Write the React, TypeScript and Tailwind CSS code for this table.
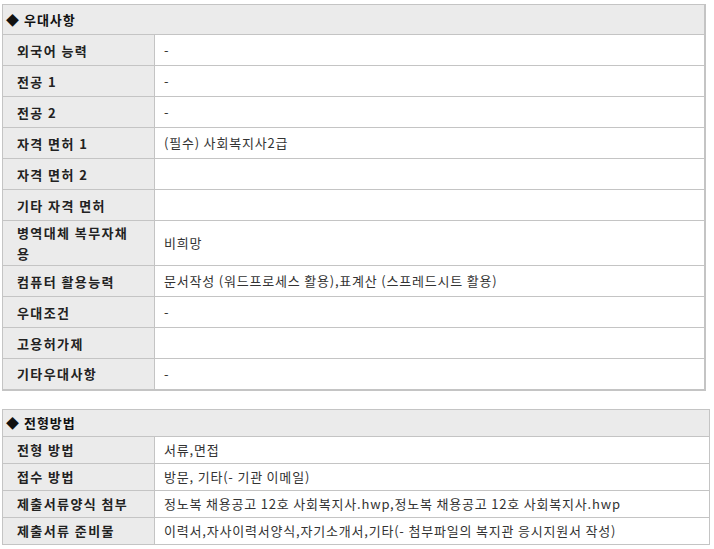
import React from 'react';

type Row = { label: React.ReactNode; key: string; value: string; h?: string };

const prefRows: Row[] = [
  { key: 'lang', label: '외국어 능력', value: '-' },
  { key: 'major1', label: '전공 1', value: '-' },
  { key: 'major2', label: '전공 2', value: '-' },
  { key: 'lic1', label: '자격 면허 1', value: '(필수) 사회복지사2급' },
  { key: 'lic2', label: '자격 면허 2', value: '' },
  { key: 'licEtc', label: '기타 자격 면허', value: '' },
  { key: 'army', label: <>병역대체 복무자채<br />용</>, value: '비희망', h: 'h-[45px]' },
  { key: 'pc', label: '컴퓨터 활용능력', value: '문서작성 (워드프로세스 활용),표계산 (스프레드시트 활용)' },
  { key: 'cond', label: '우대조건', value: '-' },
  { key: 'eps', label: '고용허가제', value: '' },
  { key: 'etc', label: '기타우대사항', value: '-' },
];

const methodRows: Row[] = [
  { key: 'way', label: '전형 방법', value: '서류,면접' },
  { key: 'recv', label: '접수 방법', value: '방문, 기타(- 기관 이메일)' },
  { key: 'form', label: '제출서류양식 첨부', value: '정노복 채용공고 12호 사회복지사.hwp,정노복 채용공고 12호 사회복지사.hwp' },
  { key: 'docs', label: '제출서류 준비물', value: '이력서,자사이력서양식,자기소개서,기타(- 첨부파일의 복지관 응시지원서 작성)' },
];

function InfoTable({ title, rows, rowH, headH, className }: { title: string; rows: Row[]; rowH: string; headH: string; className: string }) {
  return (
    <table className={`border-collapse table-fixed ${className}`}>
      <colgroup>
        <col className="w-[152px]" />
        <col />
      </colgroup>
      <tbody>
        <tr className={headH}>
          <th colSpan={2} className="bg-[#ebebeb] border border-[#c4c4c4] text-left font-bold pl-[3px] text-[13px] tracking-[1px] text-[#111]">
            ◆ {title}
          </th>
        </tr>
        {rows.map((r) => (
          <tr key={r.key} className={r.h ?? rowH}>
            <th className="bg-[#ebebeb] border border-[#c4c4c4] text-left font-bold pl-[14px] pr-[10px] text-[13px] tracking-[1.4px] leading-[21px] text-[#222]">
              {r.label}
            </th>
            <td className="bg-white border border-[#c4c4c4] pl-[9px] text-[13px] tracking-[0.8px] text-[#333]">{r.value}</td>
          </tr>
        ))}
      </tbody>
    </table>
  );
}

export default function App() {
  return (
    <div className="bg-white w-[714px] h-[549px] pt-[4px] pl-[2px]" style={{ fontFamily: '"Noto Sans CJK KR", "Noto Sans", sans-serif' }}>
      <InfoTable title="우대사항" rows={prefRows} rowH="h-[31px]" headH="h-[30px]" className="w-[704px] border-r-2 border-b-2 border-[#c4c4c4]" />
      <div className="h-[18px]" />
      <InfoTable title="전형방법" rows={methodRows} rowH="h-[27px]" headH="h-[27px]" className="w-[708px]" />
    </div>
  );
}
